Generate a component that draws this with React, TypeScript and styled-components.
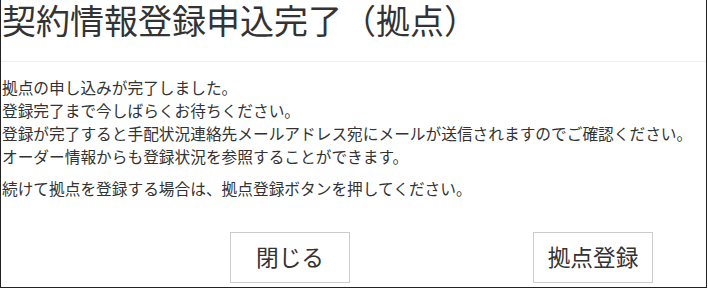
import * as React from "react";
import styled, { createGlobalStyle } from "styled-components";

const GlobalStyle = createGlobalStyle`
  html, body {
    margin: 0;
    padding: 0;
    background: #fff;
  }
  body {
    font-family: "Noto Sans CJK JP", "Noto Sans", sans-serif;
    color: #333;
  }
`;

const Panel = styled.div`
  width: 707px;
  box-sizing: border-box;
  border: 1px solid #222;
  border-top: none;
  padding: 0 0 4px 1px;
`;

const Title = styled.h1`
  margin: 0;
  font-size: 34px;
  font-weight: 400;
  line-height: 40px;
  white-space: nowrap;
`;

const Divider = styled.hr`
  margin: 21px 0 0 -1px;
  border: none;
  border-top: 1px solid #eee;
  height: 0;
`;

const Body = styled.div`
  display: flow-root;
  padding-top: 15px;
`;

const Text = styled.p`
  margin: 0 0 10px;
  font-size: 15.7px;
  line-height: 22.86px;
  white-space: nowrap;
`;

const ButtonRow = styled.div`
  display: flex;
  gap: 183px;
  padding-left: 228px;
  margin-top: 21px;
`;

const Button = styled.button`
  width: 120px;
  height: 51px;
  box-sizing: border-box;
  background: #fff;
  border: 1px solid #ccc;
  border-radius: 0;
  color: #333;
  font-family: inherit;
  font-size: 22.7px;
  line-height: 1;
  padding: 0;
  cursor: pointer;
`;

const App: React.FC = () => {
  return (
    <>
      <GlobalStyle />
      <Panel>
        <Title>契約情報登録申込完了（拠点）</Title>
        <Divider />
        <Body>
          <Text>
            拠点の申し込みが完了しました。
            <br />
            登録完了まで今しばらくお待ちください。
            <br />
            登録が完了すると手配状況連絡先メールアドレス宛にメールが送信されますのでご確認ください。
            <br />
            オーダー情報からも登録状況を参照することができます。
          </Text>
          <Text>続けて拠点を登録する場合は、拠点登録ボタンを押してください。</Text>
        </Body>
        <ButtonRow>
          <Button>閉じる</Button>
          <Button>拠点登録</Button>
        </ButtonRow>
      </Panel>
    </>
  );
};

export default App;
